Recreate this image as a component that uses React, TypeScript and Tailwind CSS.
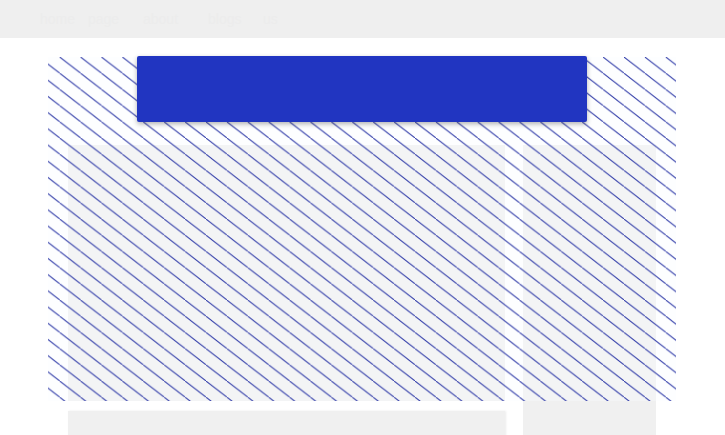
import React from "react";

function Hatch() {
  return (
    <svg className="absolute left-0 top-0 pointer-events-none" width="628" height="344" viewBox="0 0 628 344">
      <defs>
        <pattern id="hatch" patternUnits="userSpaceOnUse" width="20.9" height="16.2" x="11.7" y="0">
          <line x1="-20.9" y1="-16.2" x2="41.8" y2="32.4" stroke="#2f3aa8" strokeWidth="1" />
        </pattern>
      </defs>
      <rect x="0" y="0" width="628" height="344" fill="rgba(250,251,255,0.35)" />
      <rect x="0" y="0" width="628" height="344" fill="url(#hatch)" />
    </svg>
  );
}

export default function App() {
  return (
    <div className="w-[725px] h-[435px] overflow-hidden bg-white" style={{ fontFamily: "'Liberation Sans', Arial, sans-serif" }}>
      <header className="h-[38px] bg-[#efefef] flex items-center pl-[40px] text-[14px] text-[#ececec] whitespace-nowrap">
        <span className="w-[40px]">home</span>
        <span className="ml-[8px] w-[32px]">page</span>
        <span className="ml-[23px] w-[40px]">about</span>
        <span className="ml-[25px] w-[40px]">blogs</span>
        <span className="ml-[15px] w-[17px]">us</span>
      </header>
      <main className="pt-[19px] pl-[48px] w-[676px]">
        <div className="relative w-[628px]">
          <div className="pt-[88px] px-[20px] flex gap-[18px]">
            <div className="w-[437px] flex flex-col gap-[10px]">
              <div className="h-[256px] bg-[#f0f0f0]" />
              <div className="h-[60px] bg-[#f0f0f0] shadow-[1px_0_2px_rgba(0,0,0,0.08)]" />
            </div>
            <div className="w-[133px] bg-[#f0f0f0] h-[300px]" />
          </div>
          <Hatch />
          <div className="absolute left-[89px] top-[-1px] w-[450px] h-[66px] bg-[#2135c1] rounded-[2px] shadow-[0_2px_5px_rgba(0,0,0,0.3)]" />
        </div>
      </main>
    </div>
  );
}
